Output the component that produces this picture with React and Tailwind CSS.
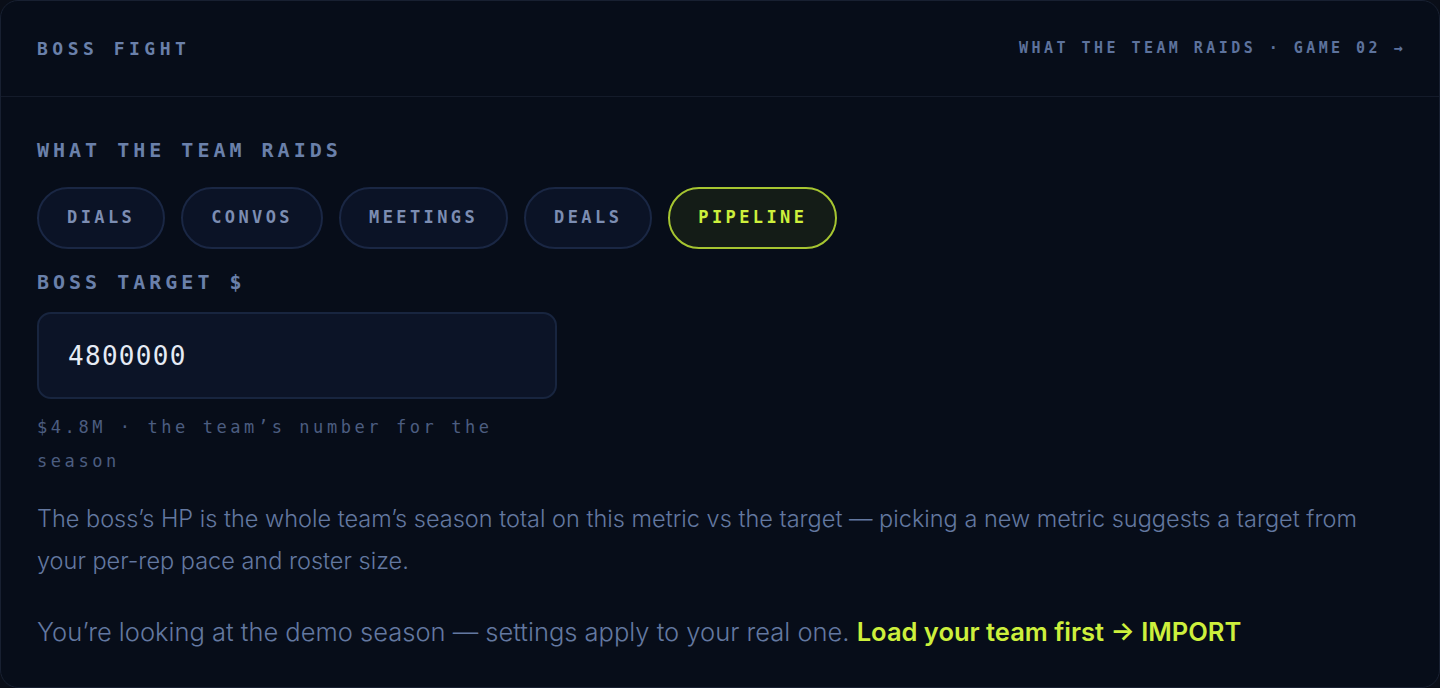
import { useState } from 'react';

const metrics = ['DIALS', 'CONVOS', 'MEETINGS', 'DEALS', 'PIPELINE'];

const mono = "font-['DejaVu_Sans_Mono','Liberation_Mono',monospace]";
const sans = "font-['Inter','Roboto',sans-serif]";

const MetricPill = ({ label, active, onClick }) => (
  <button
    onClick={onClick}
    className={`h-[62px] px-[28px] rounded-full border-2 ${mono} text-[17px] font-bold tracking-[0.2em] ${
      active
        ? 'border-[#a6c531] bg-[#141c17] text-[#cdf03c]'
        : 'border-[#1a2744] bg-[#0b1326] text-[#7c8db2]'
    }`}
  >
    {label}
  </button>
);

const FieldLabel = ({ children }) => (
  <div className={`${mono} text-[20px] leading-[28px] font-bold tracking-[0.2em] text-[#6a80aa]`}>
    {children}
  </div>
);

export default function App() {
  const [metric, setMetric] = useState('PIPELINE');
  const [target, setTarget] = useState('4800000');

  return (
    <div className="min-h-screen bg-[#0a0e18]">
      <div className="h-[688px] rounded-[18px] border border-[#182031] bg-[#070d19] overflow-hidden">
        <header className="h-[96px] flex items-center justify-between px-9 border-b border-[#141b2a]">
          <span className={`${mono} text-[18px] font-bold tracking-[0.25em] text-[#6a80aa]`}>
            BOSS FIGHT
          </span>
          <span className={`${mono} text-[15px] font-bold tracking-[0.23em] text-[#5d729c] -mr-[3px]`}>
            WHAT THE TEAM RAIDS · GAME 02 →
          </span>
        </header>

        <div className="px-9 pt-[39px]">
          <FieldLabel>WHAT THE TEAM RAIDS</FieldLabel>
          <div className="mt-[23px] flex gap-[16px]">
            {metrics.map((m) => (
              <MetricPill key={m} label={m} active={metric === m} onClick={() => setMetric(m)} />
            ))}
          </div>

          <div className="mt-[19px]">
            <FieldLabel>BOSS TARGET $</FieldLabel>
          </div>
          <input
            value={target}
            onChange={(e) => setTarget(e.target.value)}
            className={`mt-[16px] block w-[520px] h-[87px] rounded-[14px] border-2 border-[#18253f] bg-[#0c1427] px-[29px] ${mono} text-[26px] tracking-[0.05em] text-[#e6ebf5] outline-none`}
          />
          <p className={`mt-[11px] w-[520px] ${mono} text-[17px] leading-[34px] tracking-[0.21em] text-[#4c5d80]`}>
            $4.8M · the team’s number for the season
          </p>

          <p className={`mt-[20px] ${sans} font-light text-[23.5px] leading-[42px] text-[#6378a0]`}>
            The boss’s HP is the whole team’s season total on this metric vs the target — picking a new metric suggests a target from your per-rep pace and roster size.
          </p>
          <p className={`mt-[29px] ${sans} font-light text-[25.5px] leading-[42px] text-[#6378a0]`}>
            You’re looking at the demo season — settings apply to your real one.{' '}
            <a href="#import" className="font-semibold text-[#cdf03c]">
              Load your team first → IMPORT
            </a>
          </p>
        </div>
      </div>
    </div>
  );
}
